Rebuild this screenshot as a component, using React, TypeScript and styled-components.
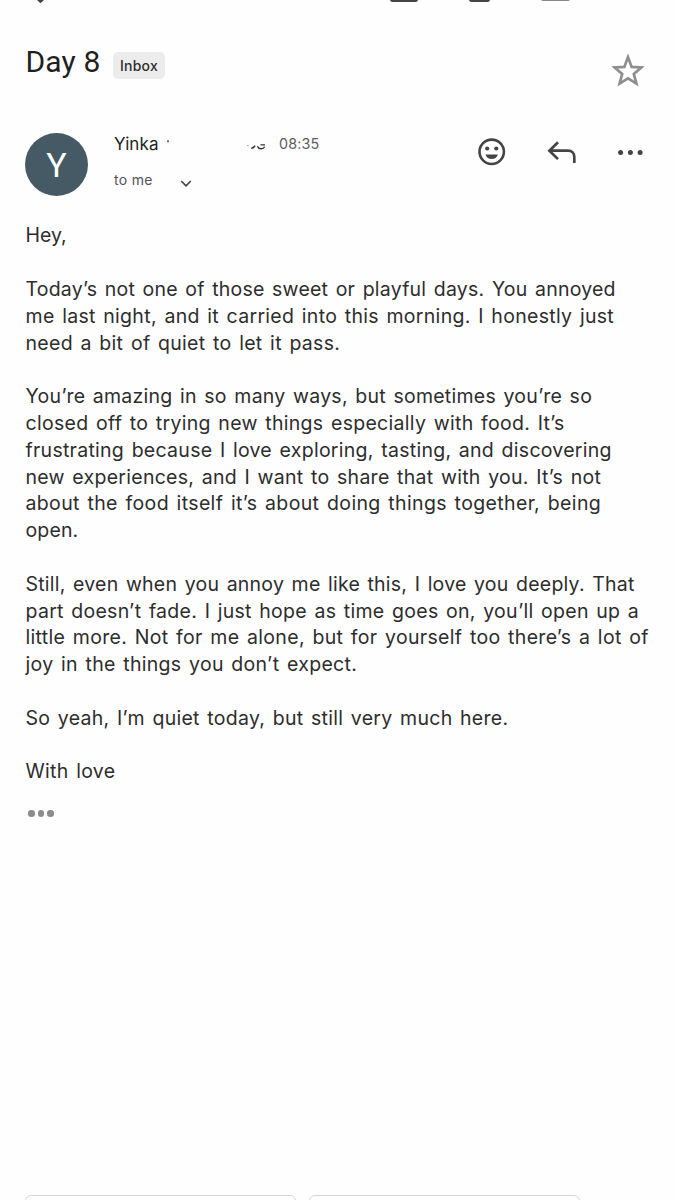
import React from 'react';
import styled, { createGlobalStyle } from 'styled-components';

const GlobalStyle = createGlobalStyle`
  * { box-sizing: border-box; }
  body { margin: 0; background: #fefefe; font-family: Inter, "Liberation Sans", sans-serif; }
`;

const Screen = styled.main`
  width: 675px;
  height: 1200px;
  overflow: hidden;
  display: flex;
  flex-direction: column;
  background: #fefefe;
`;

const TopBar = styled.div`
  height: 4px;
  flex: none;
  svg { display: block; }
`;

const SubjectRow = styled.header`
  height: 76px;
  margin-top: 28px;
  padding: 0 30px 0 25px;
  flex: none;
  display: flex;
  align-items: flex-start;
`;

const Subject = styled.h1`
  margin: 12px 0 0;
  padding-left: 0.5px;
  width: 88px;
  font-family: Roboto, Inter, sans-serif;
  font-size: 30px;
  line-height: 36px;
  font-weight: 400;
  letter-spacing: 0.15px;
  color: #1f1f1f;
  white-space: nowrap;
`;

const Label = styled.span`
  margin-top: 20px;
  width: 52px;
  height: 27px;
  border-radius: 5px;
  background: #ececec;
  color: #2e2e2e;
  font-size: 14px;
  line-height: 27px;
  font-weight: 500;
  text-align: center;
  letter-spacing: 0.25px;
`;

const StarButton = styled.span`
  margin: 22px 0 0 auto;
  height: 34px;
  svg { display: block; }
`;

const SenderRow = styled.section`
  height: 89.4px;
  margin-top: 25px;
  padding-left: 25px;
  flex: none;
  display: flex;
`;

const Avatar = styled.div`
  width: 63px;
  height: 63px;
  flex: none;
  border-radius: 50%;
  background: #455a64;
  color: #fff;
  font-family: Roboto, Inter, sans-serif;
  font-size: 34px;
  line-height: 65px;
  text-align: center;
`;

const SenderInfo = styled.div`
  width: 362px;
  margin-left: 26px;
  flex: none;
`;

const NameLine = styled.div`
  display: flex;
  height: 22px;
  line-height: 22px;
`;

const Name = styled.span`
  width: 50px;
  font-size: 17px;
  letter-spacing: 0.1px;
  color: #222;
`;

const Time = styled.span`
  margin-left: 9px;
  font-size: 14.3px;
  letter-spacing: 0.2px;
  color: #5c5c5c;
`;

const Recipient = styled.div`
  display: flex;
  margin-top: 14px;
  height: 22px;
  line-height: 22px;
  font-size: 14px;
  letter-spacing: 0.3px;
  color: #555;
  svg { margin: 10px 0 0 27px; }
`;

const Actions = styled.div`
  height: 40px;
  svg { display: block; }
`;

const Body = styled.article`
  padding-left: 25.5px;
  font-size: 19.5px;
  line-height: 26.8px;
  color: #2d2d2d;
`;

const Paragraph = styled.p`
  margin: 0 0 26.8px;
  &:last-child { margin-bottom: 0; }
`;

const Line = styled.span<{ $track: number }>`
  display: block;
  white-space: nowrap;
  letter-spacing: ${({ $track }) => $track}px;
  word-spacing: 1.8px;
`;

const Trimmed = styled.div`
  display: flex;
  gap: 3px;
  margin: 25px 0 0 28px;
`;

const Dot = styled.i`
  width: 6.6px;
  height: 6.6px;
  border-radius: 50%;
  background: #8b8b8b;
`;

const ReplyBar = styled.footer`
  display: flex;
  gap: 13px;
  margin-top: auto;
  padding-left: 25px;
  height: 5px;
  overflow: hidden;
  flex: none;
`;

const ReplyButton = styled.div`
  width: 271px;
  height: 50px;
  border: 1.5px solid #d6d6d6;
  border-radius: 6px;
`;

const paragraphs: [string, number][][] = [
  [['Hey,', 0]],
  [
    ['Today’s not one of those sweet or playful days. You annoyed', 0.223],
    ['me last night, and it carried into this morning. I honestly just', 0.3],
    ['need a bit of quiet to let it pass.', 0.305],
  ],
  [
    ['You’re amazing in so many ways, but sometimes you’re so', 0.247],
    ['closed off to trying new things especially with food. It’s', 0.29],
    ['frustrating because I love exploring, tasting, and discovering', 0.27],
    ['new experiences, and I want to share that with you. It’s not', 0.272],
    ['about the food itself it’s about doing things together, being', 0.366],
    ['open.', 0.15],
  ],
  [
    ['Still, even when you annoy me like this, I love you deeply. That', 0.226],
    ['part doesn’t fade. I just hope as time goes on, you’ll open up a', 0.275],
    ['little more. Not for me alone, but for yourself too there’s a lot of', 0.318],
    ['joy in the things you don’t expect.', 0.305],
  ],
  [['So yeah, I’m quiet today, but still very much here.', 0.28]],
  [['With love', 0.3]],
];

export default function App() {
  return (
    <>
      <GlobalStyle />
      <Screen>
        <TopBar>
          <svg width="675" height="4" viewBox="0 0 675 4">
            <path d="M37 0L40.5 3.2L44 0Z" fill="#444" />
            <rect x="390" y="-10" width="28" height="12" rx="2.5" fill="#444" />
            <rect x="469" y="-10" width="21" height="12" rx="2.5" fill="#444" />
            <rect x="541" y="-10" width="29" height="11" rx="2" fill="#888" />
          </svg>
        </TopBar>
        <SubjectRow>
          <Subject>Day 8</Subject>
          <Label>Inbox</Label>
          <StarButton>
            <svg width="34" height="34" viewBox="0 0 34 34">
              <path
                d="M17 3.5L20.6 13.3L30.4 13.9L22.8 20.3L25.4 30L17 24.7L8.6 30L11.2 20.3L3.6 13.9L13.4 13.3Z"
                transform="translate(0 -.4)"
                fill="none"
                stroke="#8e8e8e"
                strokeWidth="2.7"
              />
            </svg>
          </StarButton>
        </SubjectRow>
        <SenderRow>
          <Avatar>Y</Avatar>
          <SenderInfo>
            <NameLine>
              <Name>Yinka</Name>
              <svg width="106" height="22" viewBox="164 133 106 22" fill="none" stroke="#333">
                <path d="M168 140.3v2" strokeWidth="1.4" />
                <path d="M247.2 145.6h1.3" stroke="#888" />
                <path d="M251.2 148.3C253.5 148.4 254 147 255 145.6" strokeWidth="1.5" />
                <path d="M257.4 146.2C258.6 149.4 263.2 149.6 264.6 146.8M260.5 144.9H265" strokeWidth="1.4" />
              </svg>
              <Time>08:35</Time>
            </NameLine>
            <Recipient>
              to me
              <svg width="12" height="10" viewBox="0 0 12 10">
                <path d="M1.2 2L6 6.8L10.8 2" fill="none" stroke="#444" strokeWidth="1.7" />
              </svg>
            </Recipient>
          </SenderInfo>
          <Actions>
            <svg width="180" height="40" viewBox="476 133 180 40">
              <circle cx="491.7" cy="151.8" r="12.2" fill="none" stroke="#444" strokeWidth="2.6" />
              <circle cx="487.2" cy="148.5" r="2.1" fill="#444" />
              <circle cx="496.3" cy="148.5" r="2.1" fill="#444" />
              <path d="M485.5 154.5H497.9C496.9 157.5 494.7 159.1 491.7 159.1C488.7 159.1 486.5 157.5 485.5 154.5Z" fill="#444" />
              <path d="M558 142.3L549.4 150.7L558 159.1M549.4 150.7H568C572 150.7 574.3 153.4 574.3 157V163" fill="none" stroke="#444" strokeWidth="2.7" />
              <circle cx="620.6" cy="152.5" r="2.5" fill="#444" />
              <circle cx="630.4" cy="152.5" r="2.5" fill="#444" />
              <circle cx="640.1" cy="152.5" r="2.5" fill="#444" />
            </svg>
          </Actions>
        </SenderRow>
        <Body>
          {paragraphs.map((lines, i) => (
            <Paragraph key={i}>
              {lines.map(([text, track]) => (
                <Line key={text} $track={track}>{text}</Line>
              ))}
            </Paragraph>
          ))}
        </Body>
        <Trimmed><Dot /><Dot /><Dot /></Trimmed>
        <ReplyBar><ReplyButton /><ReplyButton /></ReplyBar>
      </Screen>
    </>
  );
}
